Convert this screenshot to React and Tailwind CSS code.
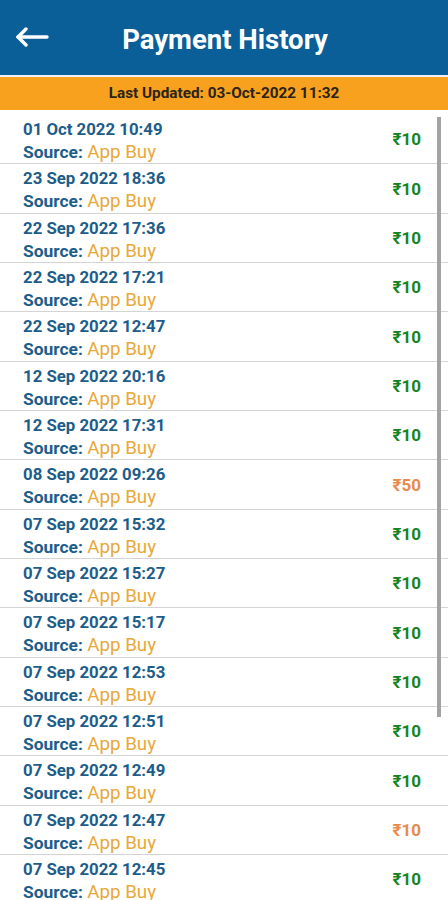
import React from 'react';

const payments = [
  { date: '01 Oct 2022 10:49', amount: '₹10' },
  { date: '23 Sep 2022 18:36', amount: '₹10' },
  { date: '22 Sep 2022 17:36', amount: '₹10' },
  { date: '22 Sep 2022 17:21', amount: '₹10' },
  { date: '22 Sep 2022 12:47', amount: '₹10' },
  { date: '12 Sep 2022 20:16', amount: '₹10' },
  { date: '12 Sep 2022 17:31', amount: '₹10' },
  { date: '08 Sep 2022 09:26', amount: '₹50', pending: true },
  { date: '07 Sep 2022 15:32', amount: '₹10' },
  { date: '07 Sep 2022 15:27', amount: '₹10' },
  { date: '07 Sep 2022 15:17', amount: '₹10' },
  { date: '07 Sep 2022 12:53', amount: '₹10' },
  { date: '07 Sep 2022 12:51', amount: '₹10' },
  { date: '07 Sep 2022 12:49', amount: '₹10' },
  { date: '07 Sep 2022 12:47', amount: '₹10', pending: true },
  { date: '07 Sep 2022 12:45', amount: '₹10' },
  { date: '07 Sep 2022 12:41', amount: '₹10' },
];

const BackArrow = () => (
  <svg width="34" height="20" viewBox="0 0 34 20" fill="none" stroke="white" strokeWidth="3.4" strokeLinecap="round" strokeLinejoin="round">
    <path d="M32 10H3" />
    <path d="M11 2L3 10l8 8" />
  </svg>
);

const PaymentRow = ({ item }) => (
  <div className="h-[49.33px] flex justify-between pl-[23px] pr-[27px] border-b border-[#d4d4d4]">
    <div className="flex flex-col pt-[3px]">
      <span className="text-[16.8px] leading-[22px] font-bold text-[#1d5d8a]">{item.date}</span>
      <span className="text-[17px] leading-[24px] whitespace-nowrap">
        <span className="font-bold text-[#1d5d8a] text-[17.4px]">Source: </span>
        <span className="text-[#e8a83a] text-[18.8px]">App Buy</span>
      </span>
    </div>
    <span className={`self-center mt-[2px] text-[17px] font-bold ${item.pending ? 'text-[#ea8a4c]' : 'text-[#16841f]'}`}>
      {item.amount}
    </span>
  </div>
);

export default function App() {
  return (
    <div className="w-[448px] h-[900px] overflow-hidden bg-white" style={{ fontFamily: 'Roboto, "Noto Sans", sans-serif' }}>
      {/* Header */}
      <div className="h-[75px] bg-[#0a5f98] flex items-center relative">
        <div className="absolute left-[15px] top-[27px]">
          <BackArrow />
        </div>
        <h1 className="w-full text-center text-white text-[27.5px] font-bold pl-[2px] pt-[4px]">Payment History</h1>
      </div>
      <div className="h-[2px] bg-[#eef2f6]" />

      {/* Last updated */}
      <div className="h-[33px] bg-[#f7a11f] flex items-center justify-center">
        <span className="text-[15.3px] font-bold text-[#2b2315]">Last Updated: 03-Oct-2022 11:32</span>
      </div>

      {/* List */}
      <div className="relative pt-[5px]">
        {payments.map((item, i) => (
          <PaymentRow key={i} item={item} />
        ))}
        <div className="absolute right-[7px] top-[7px] w-[4px] h-[600px] bg-[#a3a3a3]" />
      </div>
    </div>
  );
}
